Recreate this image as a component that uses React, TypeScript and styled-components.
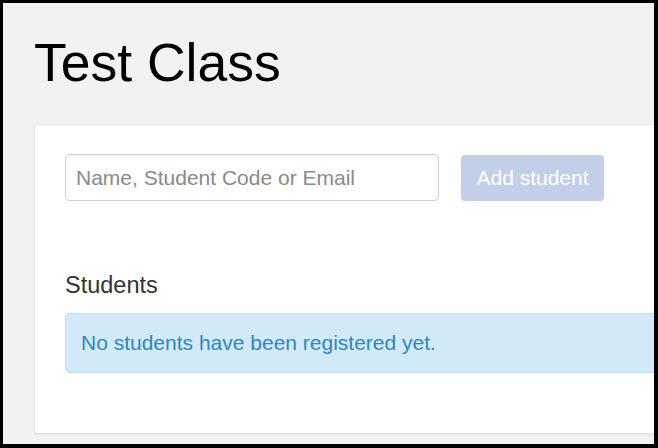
import React from "react";
import styled, { createGlobalStyle } from "styled-components";

const GlobalStyle = createGlobalStyle`
  html, body {
    margin: 0;
    padding: 0;
    background: #ffffff;
  }
  * {
    box-sizing: border-box;
  }
`;

const Frame = styled.div`
  width: 658px;
  height: 448px;
  border-style: solid;
  border-color: #000;
  border-width: 3px 4px 4px 3px;
  background: #f2f2f2;
  overflow: hidden;
  font-family: "Liberation Sans", Arial, Helvetica, sans-serif;
  display: flex;
  flex-direction: column;
  padding-left: 31px;
`;

const Title = styled.h1`
  margin: 33px 0 34px 0;
  font-size: 53.5px;
  line-height: 54px;
  font-weight: 400;
  color: #000;
`;

const Card = styled.section`
  width: 690px;
  height: 310px;
  flex-shrink: 0;
  background: #fff;
  border: 1px solid #e4e4e4;
  border-radius: 2px;
  box-shadow: 0 1px 2px rgba(0, 0, 0, 0.06);
  padding: 29px 30px 0 30px;
  display: flex;
  flex-direction: column;
`;

const AddRow = styled.div`
  display: flex;
  align-items: center;
  gap: 22px;
`;

const SearchInput = styled.input`
  width: 374px;
  height: 47px;
  border: 1px solid #cfcfcf;
  border-radius: 5px;
  padding: 0 10px;
  font-family: inherit;
  font-size: 21px;
  color: #333;
  background: #fff;
  outline: none;
  box-shadow: inset 0 1px 1px rgba(0, 0, 0, 0.04);
  &::placeholder {
    color: #8a8a8a;
  }
`;

const AddButton = styled.button`
  width: 143px;
  height: 46px;
  border: none;
  border-radius: 4px;
  background: #c3cee9;
  color: #fff;
  font-family: inherit;
  font-size: 21px;
  padding: 0;
  cursor: not-allowed;
`;

const SectionHeading = styled.h2`
  margin: 72px 0 14px 0;
  font-size: 23.5px;
  line-height: 25.85px;
  font-weight: 400;
  color: #333;
`;

const InfoAlert = styled.div`
  height: 60px;
  border: 1px solid #b9dcf2;
  border-radius: 5px;
  background: #d2eaf8;
  color: #2f86c0;
  font-size: 21px;
  line-height: 29.4px;
  padding: 14.3px 15px;
`;

export default function App() {
  return (
    <>
      <GlobalStyle />
      <Frame>
        <Title>Test Class</Title>
        <Card>
          <AddRow>
            <SearchInput placeholder="Name, Student Code or Email" />
            <AddButton disabled>Add student</AddButton>
          </AddRow>
          <SectionHeading>Students</SectionHeading>
          <InfoAlert>No students have been registered yet.</InfoAlert>
        </Card>
      </Frame>
    </>
  );
}
